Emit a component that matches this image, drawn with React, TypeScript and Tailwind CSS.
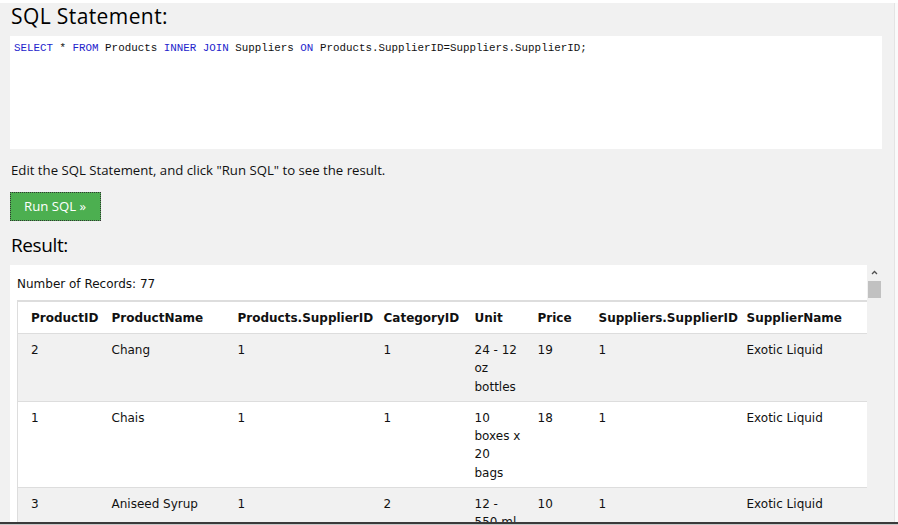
import React from "react";

const columns = [
  { title: "ProductID", width: "w-[86px]" },
  { title: "ProductName", width: "w-[126px]" },
  { title: "Products.SupplierID", width: "w-[146px]" },
  { title: "CategoryID", width: "w-[91px]" },
  { title: "Unit", width: "w-[63px]" },
  { title: "Price", width: "w-[61px]" },
  { title: "Suppliers.SupplierID", width: "w-[148px]" },
  { title: "SupplierName", width: "w-[128px]" },
];

const rows = [
  ["2", "Chang", "1", "1", "24 - 12 oz bottles", "19", "1", "Exotic Liquid"],
  ["1", "Chais", "1", "1", "10 boxes x 20 bags", "18", "1", "Exotic Liquid"],
  ["3", "Aniseed Syrup", "1", "2", "12 - 550 ml bottles", "10", "1", "Exotic Liquid"],
  ["4", "Chef Anton's Cajun Seasoning", "2", "2", "48 - 6 oz jars", "22", "2", "New Orleans Cajun Delights"],
];

const Keyword = ({ children }: { children: React.ReactNode }) => (
  <span className="text-[#2323cc]">{children}</span>
);

const App: React.FC = () => {
  return (
    <div className="h-[525px] w-[898px] flex flex-col overflow-hidden bg-white">
      <div className="h-[3px] bg-white"></div>

      <div className="flex-1 flex min-h-0">
        <main className="flex-1 flex flex-col min-h-0 bg-[#f1f1f1] pl-[10px] pr-[12px] text-black">
          <h2 className="font-['Open_Sans',sans-serif] text-[21px] tracking-[0.4px] leading-[26px] pl-[1px] mb-[7px]">
            SQL Statement:
          </h2>

          <div className="h-[113px] bg-white px-[4px] pt-[5px]">
            <pre className="font-['Liberation_Mono',monospace] text-[10.85px] leading-[14px] text-[#111]">
              <Keyword>SELECT</Keyword> * <Keyword>FROM</Keyword> Products <Keyword>INNER JOIN</Keyword> Suppliers{" "}
              <Keyword>ON</Keyword> Products.SupplierID=Suppliers.SupplierID;
            </pre>
          </div>

          <p className="mt-[12px] pl-[1px] font-['Open_Sans',sans-serif] text-[13.2px] leading-[18px] text-[#111]">
            Edit the SQL Statement, and click "Run SQL" to see the result.
          </p>

          <button className="mt-[13px] h-[29px] w-[91px] bg-[#4caf50] border border-dotted border-[#333] text-white font-['Open_Sans',sans-serif] text-[13.2px] text-left pl-[13px]">
            Run SQL »
          </button>

          <h2 className="mt-[11px] pl-[1px] font-['Open_Sans',sans-serif] text-[19px] tracking-[-0.4px] leading-[26px]">
            Result:
          </h2>

          <div className="mt-[7px] flex-1 min-h-0 flex bg-white">
            <div className="flex-1 min-w-0 overflow-hidden pl-[7px] pt-[10px] font-['DejaVu_Sans',Verdana,sans-serif] text-[12px] leading-[18px] text-[#111]">
              <div className="mb-[7px]">Number of Records: 77</div>
              <table className="table-fixed border-collapse w-[849px] border-t-2 border-l border-[#dddddd]">
                <colgroup>
                  {columns.map((c) => (
                    <col key={c.title} className={c.width} />
                  ))}
                </colgroup>
                <thead>
                  <tr className="bg-white border-b border-[#dddddd]">
                    {columns.map((c, i) => (
                      <th
                        key={c.title}
                        className={
                          i === 0
                            ? "text-left font-bold pl-[13px] pr-[2px] pt-[7px] pb-[6px] whitespace-nowrap"
                            : "text-left font-bold px-[8px] pt-[7px] pb-[6px] whitespace-nowrap"
                        }
                      >
                        {c.title}
                      </th>
                    ))}
                  </tr>
                </thead>
                <tbody className="leading-[18.3px]">
                  {rows.map((r, ri) => (
                    <tr
                      key={ri}
                      className={ri % 2 === 0 ? "bg-[#f1f1f1] border-b border-[#dddddd]" : "bg-white border-b border-[#dddddd]"}
                    >
                      {r.map((cell, ci) => (
                        <td
                          key={ci}
                          className={
                            ci === 0
                              ? "align-top pl-[13px] pr-[2px] pt-[7px] pb-[5px]"
                              : "align-top px-[8px] pt-[7px] pb-[5px] break-words"
                          }
                        >
                          {cell}
                        </td>
                      ))}
                    </tr>
                  ))}
                </tbody>
              </table>
            </div>

            <div className="w-[15px] bg-[#f1f1f1] flex flex-col items-center pt-[2px]">
              <svg width="9" height="9" viewBox="0 0 9 9" className="mt-[1px]">
                <path d="M2 6 L4.5 3.5 L7 6" fill="none" stroke="#505050" strokeWidth="1.3" />
              </svg>
              <div className="mt-[4px] w-[13px] h-[17px] bg-[#c1c1c1]"></div>
            </div>
          </div>
        </main>

        <aside className="w-[5px] bg-[#fafafa] border-l border-[#e4e4e4]"></aside>
      </div>

      <div className="h-[3px] border-t-2 border-[#3a3a3a] bg-[#c8c8c8]"></div>
    </div>
  );
};

export default App;
